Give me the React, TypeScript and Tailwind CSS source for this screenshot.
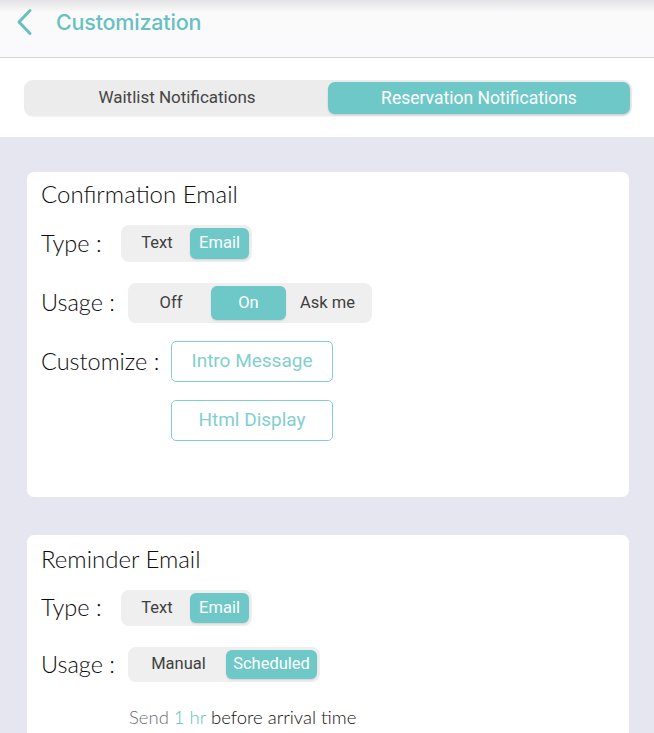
const TEAL = "bg-[#6fc8c8]";

type SegProps = {
  options: { label: string; w: string }[];
  active: number;
  h: string;
};

function Segmented({ options, active, h }: SegProps) {
  return (
    <div className={`flex items-stretch rounded-[8px] bg-[#efeff0] p-[3px] ${h}`}>
      {options.map((o, i) => (
        <div
          key={o.label}
          className={`flex items-center justify-center rounded-[6px] text-[16.5px] ${o.w} ${
            i === active
              ? `${TEAL} text-white shadow-[0_1px_2px_rgba(0,0,0,0.12)]`
              : "text-[#3f3f3f]"
          }`}
        >
          {o.label}
        </div>
      ))}
    </div>
  );
}

function Row({ label, labelW, children, className = "" }: { label: string; labelW: string; children?: React.ReactNode; className?: string }) {
  return (
    <div className={`flex items-center ${className}`}>
      <span className={`${labelW} shrink-0 text-[23.5px] font-light text-[#0d0d0d] font-['Lato',sans-serif]`}>{label}</span>
      {children}
    </div>
  );
}

function OutlineButton({ label }: { label: string }) {
  return (
    <div className="flex h-[41px] w-[162px] items-center justify-center rounded-[5px] border border-[#7fd0cf] text-[19px] text-[#82cfcf]">
      {label}
    </div>
  );
}

export default function App() {
  return (
    <div className="h-[733px] w-[654px] overflow-hidden bg-[#e5e6ef] font-['Roboto',sans-serif]">
      {/* Header */}
      <header className="flex h-[58px] items-center border-b border-[#d5d5d9] bg-gradient-to-b from-[#e4e4e6] via-[#fafafb] via-[22%] to-[#fafafc] pb-[13px]">
        <svg width="20" height="28" viewBox="0 0 20 28" className="ml-[14px]">
          <path d="M16 2.5 L5 14 L16 25.5" fill="none" stroke="#66c1c0" strokeWidth="3" strokeLinecap="round" strokeLinejoin="round" />
        </svg>
        <h1 className="ml-[22px] text-[21.5px] font-medium text-[#66c1c0] font-['Inter',sans-serif] tracking-[-0.2px]">Customization</h1>
      </header>

      {/* Tabs */}
      <div className="bg-white pb-[21px] pl-6 pr-[22px] pt-[22px]">
        <div className="grid h-[36px] grid-cols-2 rounded-[9px] bg-[#ececec] p-[2px] shadow-[0_1px_1px_rgba(0,0,0,0.05)]">
          <div className="flex items-center justify-center text-[17px] text-[#444]">Waitlist Notifications</div>
          <div className={`flex items-center justify-center rounded-[7px] ${TEAL} text-[17.5px] text-white shadow-[0_1px_2px_rgba(0,0,0,0.15)]`}>
            Reservation Notifications
          </div>
        </div>
      </div>

      {/* Cards */}
      <div className="flex flex-col gap-[38px] pl-[27px] pr-[25px] pt-[35px]">
        <section className="h-[325px] rounded-[7px] bg-white pl-[14px] pt-[7px]">
          <h2 className="h-[30px] text-[24px] font-light leading-[30px] text-[#0d0d0d] font-['Lato',sans-serif]">Confirmation Email</h2>
          <Row label="Type :" labelW="w-[80px]" className="mt-[16px]">
            <Segmented h="h-[37px]" active={1} options={[{ label: "Text", w: "w-[66px]" }, { label: "Email", w: "w-[59px]" }]} />
          </Row>
          <Row label="Usage :" labelW="w-[87px]" className="mt-[21px]">
            <Segmented
              h="h-[40px]"
              active={1}
              options={[
                { label: "Off", w: "w-[80px]" },
                { label: "On", w: "w-[75px]" },
                { label: "Ask me", w: "w-[83px]" },
              ]}
            />
          </Row>
          <Row label="Customize :" labelW="w-[130px]" className="mt-[18px]">
            <OutlineButton label="Intro Message" />
          </Row>
          <div className="ml-[130px] mt-[18px]">
            <OutlineButton label="Html Display" />
          </div>
        </section>

        <section className="h-[300px] rounded-[7px] bg-white pl-[14px] pt-[9px]">
          <h2 className="h-[30px] text-[24px] font-light leading-[30px] text-[#0d0d0d] font-['Lato',sans-serif]">Reminder Email</h2>
          <Row label="Type :" labelW="w-[80px]" className="mt-[16px]">
            <Segmented h="h-[36px]" active={1} options={[{ label: "Text", w: "w-[66px]" }, { label: "Email", w: "w-[59px]" }]} />
          </Row>
          <Row label="Usage :" labelW="w-[87px]" className="mt-[21px]">
            <Segmented
              h="h-[35px]"
              active={1}
              options={[
                { label: "Manual", w: "w-[95px]" },
                { label: "Scheduled", w: "w-[91px]" },
              ]}
            />
          </Row>
          <p className="ml-[88px] mt-[22px] text-[18.5px] font-light font-['Lato',sans-serif]">
            <span className="text-[#6e6e6e]">Send </span>
            <span className="text-[#5fbfbf]">1 hr</span>
            <span className="text-[#111]"> before arrival time</span>
          </p>
        </section>
      </div>
    </div>
  );
}
